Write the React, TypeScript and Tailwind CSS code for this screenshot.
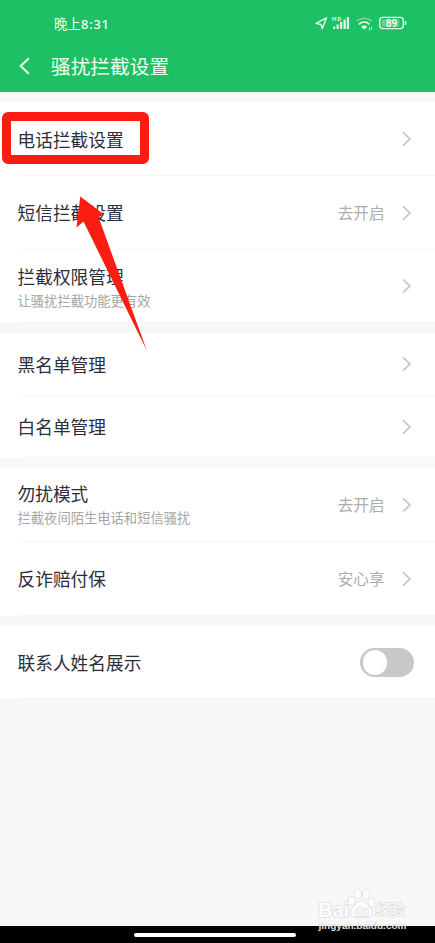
import React from "react";

type RowProps = {
  title: string;
  note?: string;
  status?: string;
  height: string;
  divider?: boolean;
  toggle?: boolean;
};

function Chevron() {
  return (
    <svg className="ml-[17px] h-4 w-[10px]" viewBox="0 0 10 16" fill="none" stroke="#c9c9c9" strokeWidth="1.8">
      <path d="M1 1.400 8 8 1 14.600" />
    </svg>
  );
}

function Row({ title, note, status, height, divider, toggle }: RowProps) {
  return (
    <div className={`flex shrink-0 bg-white pl-[17.5px] ${height}`}>
      <div className={`flex grow items-center justify-between border-b ${divider ? "border-[#f7f7f7]" : "border-[#f6f6f6]"} ${toggle ? "pr-[21px]" : "pr-[23.5px]"}`}>
        <div className={note ? (status ? "flex flex-col pt-px" : "flex flex-col pt-[2.5px]") : "flex flex-col"}>
          <span className="text-[17.7px] leading-[26px] text-[#2d2e3b]">{title}</span>
          {note && <span className="pt-px text-[13.3px] leading-[22px] text-[#a6a6a6]">{note}</span>}
        </div>
        {toggle ? (
          <div className="mt-px flex h-[29px] w-[54px] items-center rounded-full bg-[#c8c8c8] pl-[2.5px]">
            <div className="size-[24.5px] rounded-full bg-white" />
          </div>
        ) : (
          <div className="flex items-center pt-px">
            {status && <span className="-mt-[2px] text-[15.6px] leading-6 text-[#adadad]">{status}</span>}
            <Chevron />
          </div>
        )}
      </div>
    </div>
  );
}

function StatusIcons() {
  return (
    <svg className="absolute left-[312px] top-[12px]" width="98" height="22" viewBox="312 12 98 22" fill="none">
      <path d="M326.500 17.800 316 23.400l5 1.100 1.200 4.200z" stroke="#e3fae9" strokeWidth="1.400" strokeLinejoin="round" />
      <text x="332" y="20.800" fill="#e3fae9" fontSize="6" fontWeight="700" fontFamily="Roboto, sans-serif" letterSpacing="0.900">HD</text>
      <g fill="#d9f7e1">
        <rect x="333" y="26.500" width="2.300" height="2.500" />
        <rect x="336.500" y="24.500" width="2.300" height="4.500" />
        <rect x="340" y="22" width="2.300" height="7" />
        <rect x="343.500" y="19.500" width="2.300" height="9.500" />
        <rect x="346.800" y="17" width="2.300" height="12" />
      </g>
      <path d="M356.500 21.300c4.500-4 11-4 15.300 0" stroke="#73d897" strokeWidth="1.500" />
      <path d="M358.800 24.300c3.300-2.900 7.600-2.900 10.700 0" stroke="#dff9e7" strokeWidth="1.700" />
      <path d="M361 26.700c2-1.700 4.400-1.700 6.300 0L364.200 29.500z" fill="#e3fae9" />
      <path d="M369.500 27v3.500M371.700 26.500v3.500" stroke="#c0f0cf" strokeWidth="1" />
      <rect x="379.700" y="17.400" width="23.600" height="11.200" rx="3" stroke="#dff9e7" strokeWidth="1.400" />
      <rect x="381.700" y="19.300" width="17.500" height="7.400" rx="1" fill="#62d289" />
      <path d="M405.500 21.200v3.600" stroke="#dff9e7" strokeWidth="1.600" />
      <text x="391.500" y="26.600" fill="#fff" fontSize="10" fontWeight="500" textAnchor="middle" fontFamily="Roboto, sans-serif">89</text>
    </svg>
  );
}

function Watermark() {
  return (
    <svg className="absolute left-[310px] top-[884px]" width="108" height="52" viewBox="310 884 108 52">
      <g fill="#fcfcfc" stroke="#dedede" strokeWidth="1.600" paintOrder="stroke" strokeLinejoin="round">
        <ellipse cx="351.500" cy="901" rx="3.200" ry="4.300" />
        <ellipse cx="357.800" cy="893.800" rx="3.400" ry="4.500" />
        <ellipse cx="366" cy="894.300" rx="3.400" ry="4.500" />
        <ellipse cx="371.300" cy="902.500" rx="3" ry="4.300" />
        <path d="M361.500 901c-5 0-6 5-9 7.500-3.500 3.500-1.500 8.500 3 8.500h12c5 0 6.500-5 3-8.500-3-2.500-4-7.500-9-7.500z" />
        <text x="318" y="916.500" fontSize="19.500" fontWeight="700" fontFamily="'Liberation Sans', sans-serif" textLength="31" lengthAdjust="spacingAndGlyphs">Bai</text>
        <text x="354.500" y="915.500" fontSize="13" fontWeight="700" fontFamily="'Liberation Sans', sans-serif" textLength="14" lengthAdjust="spacingAndGlyphs">du</text>
        <text x="375.500" y="915" fontSize="14.500" fontWeight="500" fontFamily="'Noto Sans CJK SC', sans-serif" textLength="29" lengthAdjust="spacingAndGlyphs">经验</text>
      </g>
      <text x="318.500" y="929" fontSize="9" fontWeight="700" fill="#e2e2e2" fontFamily="'Liberation Sans', sans-serif" textLength="88" lengthAdjust="spacingAndGlyphs">jingyan.baidu.com</text>
    </svg>
  );
}

export default function App() {
  return (
    <div className="relative flex h-[943px] w-[435px] flex-col overflow-hidden bg-[#f8f8f8] font-['Noto_Sans_CJK_SC',sans-serif]">
      <header className="h-[92px] shrink-0 bg-[#1dc064] text-[#f0fff4]">
        <div className="flex h-[46px] items-center pl-[54px] pt-px">
          <span className="text-[13.3px] leading-5">晚上</span>
          <span className="pl-[0.5px] font-['Noto_Sans',sans-serif] text-[13px] font-medium leading-5 tracking-[0.7px]">8:31</span>
        </div>
        <div className="flex h-[40px] items-center pl-[19px]">
          <svg className="h-[18px] w-[11px]" viewBox="0 0 11 18" fill="none" stroke="currentColor" strokeWidth="2">
            <path d="M9.800 1.200 1.700 9l8.100 7.800" />
          </svg>
          <h1 className="-mt-px ml-[21px] text-[19.700px] leading-[30px]">骚扰拦截设置</h1>
        </div>
      </header>
      <main className="flex grow flex-col pt-[10px]">
        <section>
          <Row title="电话拦截设置" height="h-[74px]" divider />
          <Row title="短信拦截设置" status="去开启" height="h-[73.500px]" divider />
          <Row title="拦截权限管理" note="让骚扰拦截功能更有效" height="h-[73.500px]" />
        </section>
        <section className="mt-[10px]">
          <Row title="黑名单管理" height="h-[62.500px]" divider />
          <Row title="白名单管理" height="h-[62.500px]" />
        </section>
        <section className="mt-[9.500px]">
          <Row title="勿扰模式" note="拦截夜间陌生电话和短信骚扰" status="去开启" height="h-[74px]" divider />
          <Row title="反诈赔付保" status="安心享" height="h-[74px]" />
        </section>
        <section className="mt-[10px]">
          <Row title="联系人姓名展示" height="h-[73.500px]" toggle />
        </section>
      </main>
      <footer className="flex h-[17px] shrink-0 justify-center bg-black pr-[5px] pt-[7px]">
        <div className="h-1 w-[162px] rounded-full bg-white" />
      </footer>
      <StatusIcons />
      <div className="absolute left-[2px] top-[112px] h-[52px] w-[147px] rounded-[6px] border-[9px] border-[#fc1d12]" />
      <svg className="absolute left-[70px] top-[190px]" width="84" height="164" viewBox="70 190 84 164">
        <path d="M80.300 196.500 76.500 227.500 83.500 221.500 146.800 350.500 98.500 217 104 214.500z" fill="#fc1d12" />
      </svg>
      <Watermark />
    </div>
  );
}
